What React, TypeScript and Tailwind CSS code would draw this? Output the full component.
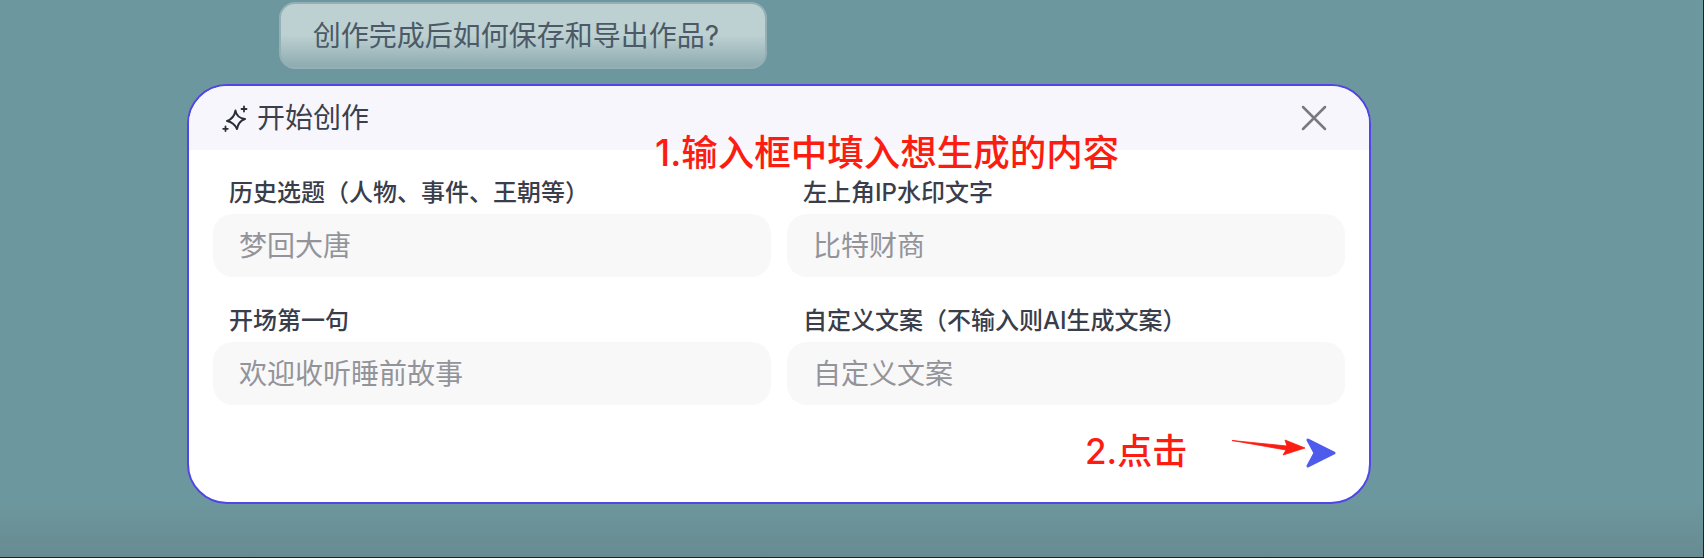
import React from 'react';

const font = { fontFamily: '"Inter", "Noto Sans CJK SC", sans-serif' };

function Field({ label, placeholder }: { label: string; placeholder: string }) {
    return (
        <div className="flex flex-col">
            <div className="h-[46px] pl-[16px] pt-[4px] flex items-center text-[24px] leading-none font-medium text-[#3a3d4a] whitespace-nowrap">
                {label}
            </div>
            <div className="h-[63px] rounded-[20px] bg-[#f8f8f9] px-[26px] flex items-center text-[28px] text-[#939499] whitespace-nowrap">
                {placeholder}
            </div>
        </div>
    );
}

export default function App() {
    return (
        <div
            style={font}
            className="relative h-[558px] w-[1704px] overflow-hidden border-b border-r border-[#1c2526] bg-gradient-to-b from-[#6d979e] via-[#6d979e] via-90% to-[#678b91] pt-[2px]"
        >
            <div className="ml-[279px] flex h-[67px] w-[488px] items-center justify-center rounded-[16px] border-2 border-[#94b0b4] bg-gradient-to-b from-[#bdd0d2] via-[#bdd0d2] to-[#8dabb0] pr-[14px] text-[28px] text-[#4b5a66]">
                创作完成后如何保存和导出作品?
            </div>

            <div className="relative ml-[187px] mt-[15px] h-[420px] w-[1184px] overflow-hidden rounded-[40px] border-2 border-[#4f46e5] bg-white">
                <div className="flex h-[64px] items-center justify-between bg-[#f7f6fc] pl-[32px] pr-[42px]">
                    <div className="flex items-center gap-[8px] text-[28px] text-[#3b3f4c]">
                        <svg width="28" height="28" viewBox="0 0 28 28" fill="none" stroke="#2b2e38" strokeWidth="2" strokeLinejoin="round" strokeLinecap="round">
                            <path d="M14.5 6.5 C15 11 18 14 24 15 C19.5 16.5 17 19.5 16 25 C14 20.5 11 18 6 17 C10.5 15.5 13.5 12 14.5 6.5 Z" />
                            <path d="M23 2.5 L23 7.5 M20.5 5 L25.5 5" strokeWidth="1.8" />
                            <path d="M4.5 22.5 L4.5 27 M2.2 24.8 L6.8 24.8" strokeWidth="1.8" />
                        </svg>
                        <span>开始创作</span>
                    </div>
                    <svg width="26" height="26" viewBox="0 0 26 26" stroke="#7a7a7e" strokeWidth="2.5" strokeLinecap="round">
                        <path d="M2 2 L24 24 M24 2 L2 24" />
                    </svg>
                </div>

                <div className="grid grid-cols-2 gap-x-[16px] gap-y-[19px] px-[24px] pt-[18px]">
                    <Field label="历史选题（人物、事件、王朝等）" placeholder="梦回大唐" />
                    <Field label="左上角IP水印文字" placeholder="比特财商" />
                    <Field label="开场第一句" placeholder="欢迎收听睡前故事" />
                    <Field label="自定义文案（不输入则AI生成文案）" placeholder="自定义文案" />
                </div>

                <div className="mt-[32px] flex items-center justify-end pr-[33px]">
                    <svg width="30" height="32" viewBox="0 0 30 32">
                        <path d="M2 3 L28 16 L2 29 L9 16 Z" fill="#4f5bed" stroke="#4f5bed" strokeWidth="3" strokeLinejoin="round" />
                    </svg>
                </div>
            </div>

            {/* annotations drawn over the page */}
            <div className="absolute left-[655px] top-[130px] text-[36.5px] font-medium leading-[46px] text-[#fb1c12] whitespace-nowrap">
                1.输入框中填入想生成的内容
            </div>
            <div className="absolute left-[1085px] top-[428px] text-[35px] font-medium leading-[46px] text-[#fb1c12] whitespace-nowrap">
                2.点击
            </div>
            <svg className="absolute left-[1231px] top-[438px]" width="76" height="22" viewBox="0 0 76 22">
                <path d="M1 2.5 L56 8 L54 2 L74 10 L52 17 L55 12 Z" fill="#fb1c12" stroke="#fb1c12" strokeWidth="0.8" strokeLinejoin="round" />
            </svg>
        </div>
    );
}
